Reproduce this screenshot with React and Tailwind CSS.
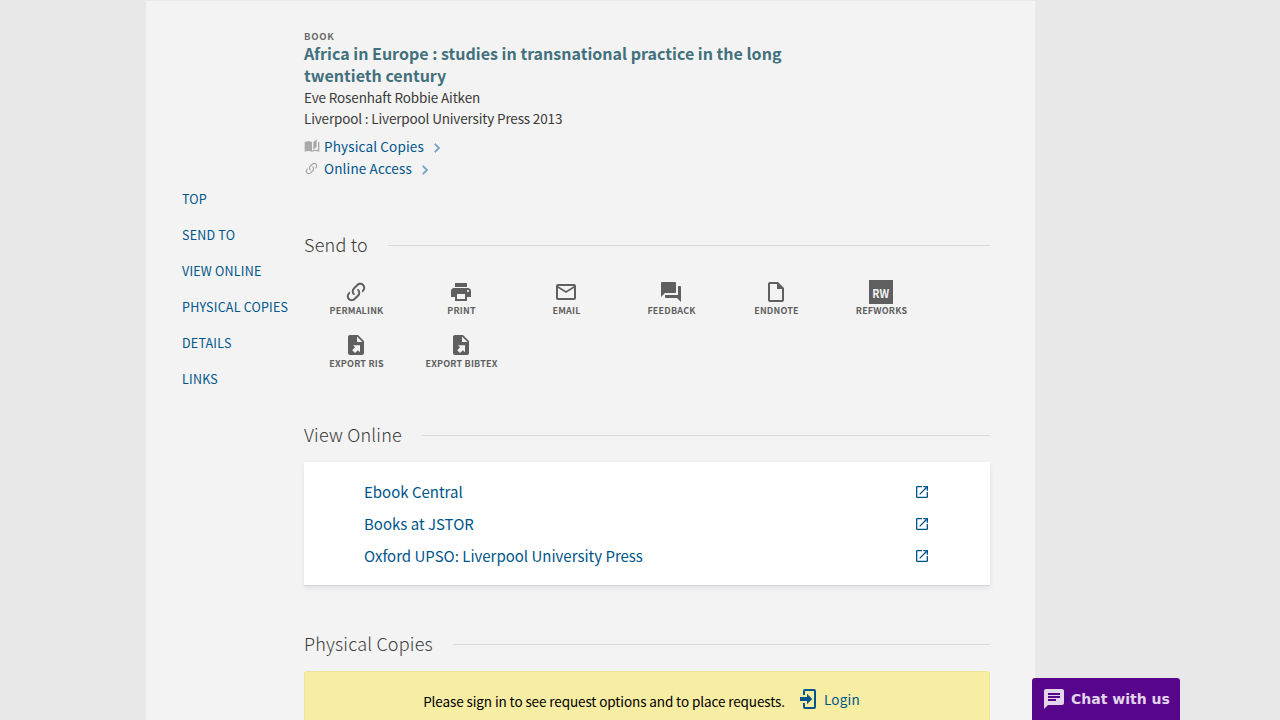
import { MdPrint, MdMailOutline, MdQuestionAnswer, MdOutlineInsertDriveFile, MdOpenInNew, MdChat } from 'react-icons/md';

const LINK = 'M10.59,13.41C11,13.8 11,14.44 10.59,14.83C10.2,15.22 9.56,15.22 9.17,14.83C7.22,12.88 7.22,9.71 9.17,7.76V7.76L12.71,4.22C14.66,2.27 17.83,2.27 19.78,4.22C21.73,6.17 21.73,9.34 19.78,11.29L18.29,12.78C18.3,11.96 18.17,11.14 17.89,10.36L18.36,9.88C19.54,8.71 19.54,6.81 18.36,5.64C17.19,4.46 15.29,4.46 14.12,5.64L10.59,9.17C9.41,10.34 9.41,12.24 10.59,13.41M13.41,9.17C13.8,8.78 14.44,8.78 14.83,9.17C16.78,11.12 16.78,14.29 14.83,16.24V16.24L11.29,19.78C9.34,21.73 6.17,21.73 4.22,19.78C2.27,17.83 2.27,14.66 4.22,12.71L5.71,11.22C5.7,12.04 5.83,12.86 6.11,13.65L5.64,14.12C4.46,15.29 4.46,17.19 5.64,18.36C6.81,19.54 8.71,19.54 9.88,18.36L13.41,14.83C14.59,13.66 14.59,11.76 13.41,10.59C13,10.2 13,9.56 13.41,9.17Z';
const EXPORT = 'M6,2C4.89,2 4,2.9 4,4V20A2,2 0 0,0 6,22H18A2,2 0 0,0 20,20V8L14,2M13,3.5L18.5,9H13M8.93,12.22H16V19.29L13.88,17.17L11.05,20L8.22,17.17L11.05,14.35';
const LOGIN = 'M10,17.25V14H3V10H10V6.75L15.25,12L10,17.25M8,2H17A2,2 0 0,1 19,4V20A2,2 0 0,1 17,22H8A2,2 0 0,1 6,20V16H8V20H17V4H8V8H6V4A2,2 0 0,1 8,2Z';
const BOOK = 'M19 2L14 6.5V17.5L19 13V2M6.5 5C4.55 5 2.45 5.4 1 6.5V20.5C3 19.9 5 19.5 6.5 19.5C8.45 19.5 10.55 19.9 12 21C13.35 20.15 15.8 19.5 17.5 19.5C19.15 19.5 20.85 19.81 23 20.8V6.5C22.4 6.05 21.75 5.75 21 5.5V18C19.9 17.65 18.7 17.5 17.5 17.5C15.8 17.5 13.35 18.15 12 19V6.5C10.55 5.4 8.45 5 6.5 5Z';
const CHEVRON = 'M8.59 16.59L13.17 12 8.59 7.41 10 6l6 6-6 6z';

function Icon({ d, className }) {
  return (
    <svg viewBox="0 0 24 24" fill="currentColor" fillRule="evenodd" className={className}>
      <path d={d} />
    </svg>
  );
}

function RefWorks() {
  return (
    <span className="flex size-6 items-center justify-center bg-[#5f5f5f] text-[12px] leading-6 font-bold text-[#f3f3f3]">
      <span className="mt-px scale-x-[0.88]">RW</span>
    </span>
  );
}

const nav = ['TOP', 'SEND TO', 'VIEW ONLINE', 'PHYSICAL COPIES', 'DETAILS', 'LINKS'];

const actions = [
  { label: 'PERMALINK', icon: <Icon d={LINK} className="size-6" /> },
  { label: 'PRINT', icon: <MdPrint className="size-6" /> },
  { label: 'EMAIL', icon: <MdMailOutline className="size-6" /> },
  { label: 'FEEDBACK', icon: <MdQuestionAnswer className="size-6" /> },
  { label: 'ENDNOTE', icon: <MdOutlineInsertDriveFile className="size-6" /> },
  { label: 'REFWORKS', icon: <RefWorks /> },
  { label: 'EXPORT RIS', icon: <Icon d={EXPORT} className="size-6" /> },
  { label: 'EXPORT BIBTEX', icon: <Icon d={EXPORT} className="size-6" /> },
];

const sources = ['Ebook Central', 'Books at JSTOR', 'Oxford UPSO: Liverpool University Press'];

function SectionTitle({ children }) {
  return (
    <div className="flex h-7 items-center gap-5">
      <h2 className="-mt-[3px] text-[18px] leading-7 font-light tracking-[0.2px] whitespace-nowrap text-[#3a3a3a]">{children}</h2>
      <div className="h-px flex-1 bg-[#dadada]" />
    </div>
  );
}

function Availability({ icon, children }) {
  return (
    <div className="flex h-[22px] items-center">
      <span className="w-5 text-[#a9a9a9]">{icon}</span>
      <a className="text-[13.5px] leading-[22px] tracking-[0.15px] text-[#00558b]">{children}</a>
      <Icon d={CHEVRON} className="mt-[3px] ml-1 size-[18px] stroke-current stroke-[0.8] text-[#7ba6c4]" />
    </div>
  );
}

export default function App() {
  return (
    <div className="h-[720px] overflow-hidden bg-[#e8e8e8] pl-[146px] font-['Noto_Sans_CJK_SC',sans-serif]">
      <div className="flex h-full w-[889px] border-t border-[#e8e8e8] bg-[#f3f3f3] pl-9">
        <nav className="mt-[180px] flex w-[122px] flex-col">
          {nav.map((n) => (
            <a key={n} className="h-9 text-[12.5px] leading-9 tracking-[0.22px] whitespace-nowrap text-[#00558b]">{n}</a>
          ))}
        </nav>
        <main className="w-[686px] pt-[29px]">
          <header className="h-[201px]">
            <div className="h-3 text-[9.5px] leading-3 font-bold tracking-[0.7px] text-[#6a6a6a]">BOOK</div>
            <h1 className="mb-px w-[520px] text-[16px] leading-[22px] font-bold tracking-[0.01px] text-[#43707d]">
              Africa in Europe : studies in transnational practice in the long<br />twentieth century
            </h1>
            <p className="text-[13.5px] leading-[21px] tracking-[-0.13px] text-[#3a3a3a]">Eve Rosenhaft Robbie Aitken</p>
            <p className="mb-[6px] text-[13.5px] leading-[21px] tracking-[-0.15px] text-[#3a3a3a]">Liverpool : Liverpool University Press 2013</p>
            <Availability icon={<Icon d={BOOK} className="size-4" />}>Physical Copies</Availability>
            <Availability icon={<Icon d={LINK} className="size-[15px]" />}>Online Access</Availability>
          </header>

          <SectionTitle>Send to</SectionTitle>
          <div className="mt-[21px] grid h-[141px] grid-cols-[repeat(6,105px)] content-start">
            {actions.map((a) => (
              <div key={a.label} className="flex h-[53px] flex-col items-center text-[#5f5f5f]">
                <span className="mr-px">{a.icon}</span>
                <span className="text-[9px] leading-[13px] font-bold tracking-[0.2px] whitespace-nowrap">{a.label}</span>
              </div>
            ))}
          </div>

          <SectionTitle>View Online</SectionTitle>
          <div className="mt-[13px] h-[124px] border-b border-[#d5d5e0] bg-white px-[60px] pt-[14px] shadow-[0_2px_5px_rgba(0,0,0,0.08)]">
            {sources.map((s) => (
              <a key={s} className="flex h-8 items-center justify-between text-[#00558b]">
                <span className="text-[15px] leading-8">{s}</span>
                <MdOpenInNew className="size-4" />
              </a>
            ))}
          </div>

          <div className="mt-[44px]">
            <SectionTitle>Physical Copies</SectionTitle>
          </div>
          <div className="mt-[13px] flex h-[62px] items-start justify-center rounded-[3px] border border-[#eee39a] bg-[#f7eda3] pt-[15px] pr-[11px]">
            <span className="text-[13.5px] leading-[28px] tracking-[-0.1px] text-black">Please sign in to see request options and to place requests.</span>
            <a className="ml-3 flex items-center text-[#00558b]">
              <Icon d={LOGIN} className="size-6" />
              <span className="ml-[3px] text-[13.5px] leading-6 tracking-[0.2px]">Login</span>
            </a>
          </div>
        </main>
      </div>
      <button className="absolute top-[678px] left-[1032px] flex h-[42px] w-[148px] items-center rounded-t-[3px] bg-[#57068c] pl-[10px] font-['DejaVu_Sans',sans-serif] text-[14px] font-bold text-[#e3d5ec]">
        <MdChat className="mr-[5px] size-6" />
        Chat with us
      </button>
    </div>
  );
}
